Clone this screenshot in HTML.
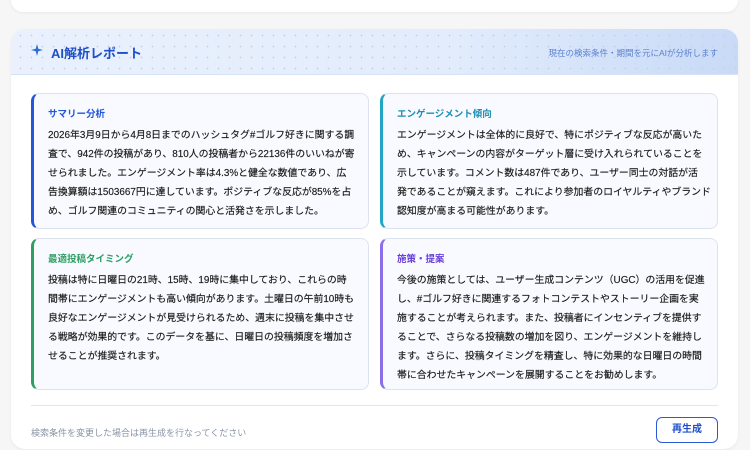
<!DOCTYPE html>
<html><head><meta charset="utf-8"><style>
*{box-sizing:border-box;margin:0;padding:0}
body{width:750px;height:450px;overflow:hidden;background:#f6f6f7;font-family:"Liberation Sans","Noto Sans CJK JP",sans-serif;position:relative}
.top{position:absolute;left:11px;top:-20px;width:727px;height:32px;background:#fff;border-radius:12px;box-shadow:0 1px 3px rgba(0,0,0,.06)}
.rep{position:absolute;left:11px;top:29px;width:727px;height:420px;background:#fff;border-radius:14px;overflow:hidden;box-shadow:0 1px 3px rgba(0,0,0,.06)}
.hd{position:absolute;left:0;top:0;width:100%;height:46px;background:linear-gradient(100deg,#eaf1fd 0%,#e2ecfc 60%,#c8daf7 100%);border-bottom:1px solid #d6e2f5}
.hd:before{content:"";position:absolute;inset:0;background-image:radial-gradient(circle,#c3cfe3 0.7px,transparent 1px);background-size:11px 11px;background-position:4px 1px}
.ttl{position:absolute;left:40px;top:14px;font-size:13px;font-weight:bold;color:#1e4fc9}
.star{position:absolute;left:20px;top:15px}
.sub{position:absolute;right:20px;top:18px;font-size:8.5px;color:#5d80d0}
.card{position:absolute;width:338px;background:#f8faff;border:1px solid #dde3ee;border-radius:8px;border-left:3px solid;padding:12px 0 0 14px;overflow:hidden}
.card h3{font-size:9.5px;font-weight:bold;margin-bottom:6px}
.card p{font-size:9.9px;line-height:19px;color:#1a1a1a;white-space:nowrap;-webkit-text-stroke:0.15px #1a1a1a}
.div{position:absolute;left:20px;top:376px;width:687px;height:1px;background:#e2e7ef}
.ft{position:absolute;left:20px;top:397px;font-size:9px;color:#8a94a6}
.btn{position:absolute;left:645px;top:388px;width:62px;height:26px;border:1px solid #2a5bd7;border-radius:6px;color:#1f4fcf;font-size:10px;font-weight:bold;text-align:center;line-height:24px}
</style></head><body>
<div class="top"></div>
<div class="rep">
<div class="hd"><svg class="star" width="12" height="12" viewBox="0 0 12 12"><path d="M6 0 L7.3 4.7 L12 6 L7.3 7.3 L6 12 L4.7 7.3 L0 6 L4.7 4.7Z" fill="#2a6fd6"/></svg><div class="ttl">AI解析レポート</div><div class="sub">現在の検索条件・期間を元にAIが分析します</div></div>
<div class="card" style="left:20px;top:64px;height:136px;border-left-color:#2357d9"><h3 style="color:#2357d9">サマリー分析</h3><p>2026年3月9日から4月8日までのハッシュタグ#ゴルフ好きに関する調<br>査で、942件の投稿があり、810人の投稿者から22136件のいいねが寄<br>せられました。エンゲージメント率は4.3%と健全な数値であり、広<br>告換算額は1503667円に達しています。ポジティブな反応が85%を占<br>め、ゴルフ関連のコミュニティの関心と活発さを示しました。</p></div>
<div class="card" style="left:369px;top:64px;height:136px;border-left-color:#23a6c4"><h3 style="color:#1c8fb0">エンゲージメント傾向</h3><p>エンゲージメントは全体的に良好で、特にポジティブな反応が高いた<br>め、キャンペーンの内容がターゲット層に受け入れられていることを<br>示しています。コメント数は487件であり、ユーザー同士の対話が活<br>発であることが窺えます。これにより参加者のロイヤルティやブランド<br>認知度が高まる可能性があります。</p></div>
<div class="card" style="left:20px;top:209px;height:152px;border-left-color:#2e9e62"><h3 style="color:#2e9e62">最適投稿タイミング</h3><p>投稿は特に日曜日の21時、15時、19時に集中しており、これらの時<br>間帯にエンゲージメントも高い傾向があります。土曜日の午前10時も<br>良好なエンゲージメントが見受けられるため、週末に投稿を集中させ<br>る戦略が効果的です。このデータを基に、日曜日の投稿頻度を増加さ<br>せることが推奨されます。</p></div>
<div class="card" style="left:369px;top:209px;height:152px;border-left-color:#8b6fe8"><h3 style="color:#6a3fd8">施策・提案</h3><p>今後の施策としては、ユーザー生成コンテンツ（UGC）の活用を促進<br>し、#ゴルフ好きに関連するフォトコンテストやストーリー企画を実<br>施することが考えられます。また、投稿者にインセンティブを提供す<br>ることで、さらなる投稿数の増加を図り、エンゲージメントを維持し<br>ます。さらに、投稿タイミングを精査し、特に効果的な日曜日の時間<br>帯に合わせたキャンペーンを展開することをお勧めします。</p></div>
<div class="div"></div>
<div class="ft">検索条件を変更した場合は再生成を行なってください</div>
<div class="btn">再生成</div>
</div>
</body></html>
